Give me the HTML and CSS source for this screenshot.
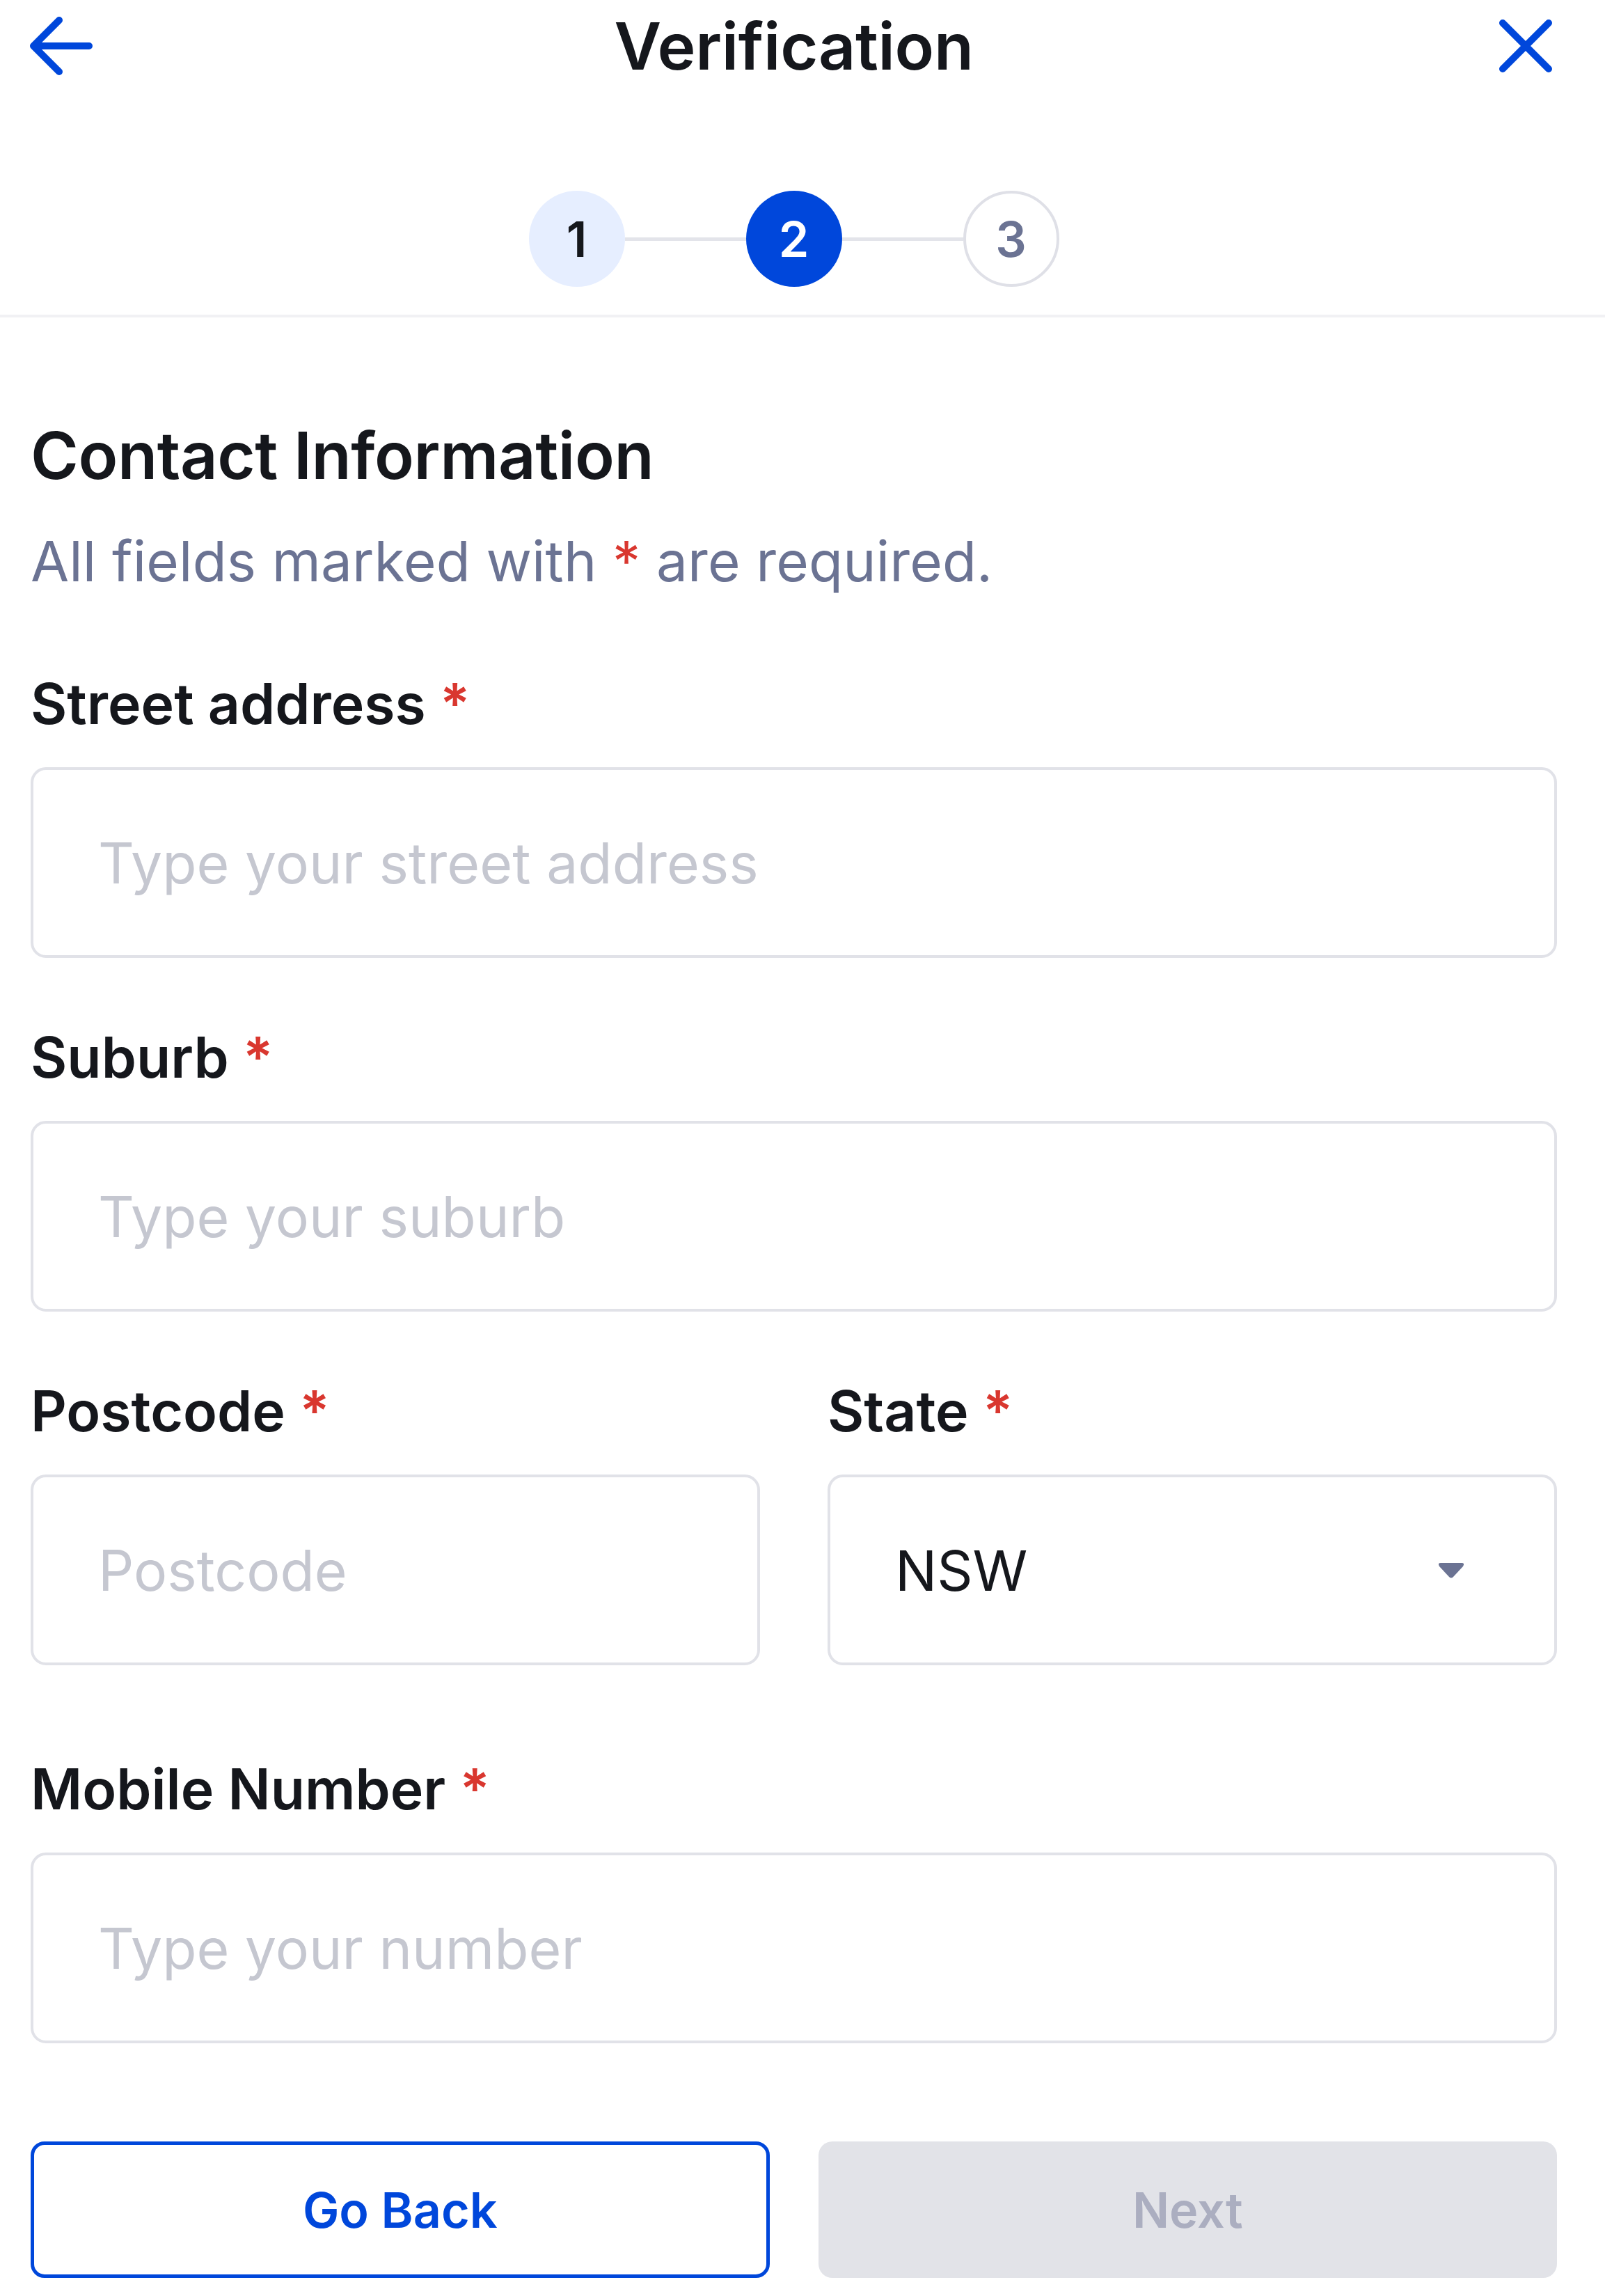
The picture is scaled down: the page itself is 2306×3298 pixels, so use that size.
FILE: index.html
```html
<!DOCTYPE html>
<html lang="en">
<head>
<meta charset="utf-8">
<title>Verification</title>
<link rel="stylesheet" href="styles.css">
</head>
<body>
<header class="top">
  <div class="bar">
    <button class="icon-btn back" aria-label="Back">
      <svg viewBox="0 0 100 100" width="100" height="100"><path d="M47 13 L10 50 L47 87 M10 50 H90" fill="none" stroke="#0047db" stroke-width="10" stroke-linecap="round" stroke-linejoin="round"/></svg>
    </button>
    <h1 class="title">Verification</h1>
    <button class="icon-btn close" aria-label="Close">
      <svg viewBox="0 0 100 100" width="100" height="100"><path d="M17 17 L83 83 M83 17 L17 83" fill="none" stroke="#0047db" stroke-width="10" stroke-linecap="round"/></svg>
    </button>
  </div>
  <ol class="stepper">
    <li class="step done">1</li>
    <li class="connector"></li>
    <li class="step current">2</li>
    <li class="connector"></li>
    <li class="step todo">3</li>
  </ol>
</header>
<main class="form">
  <h2 class="heading">Contact Information</h2>
  <p class="sub">All fields marked with <span class="req">*</span> are required.</p>
  <div class="fields">
    <div class="field">
      <label class="label">Street address <span class="req">*</span></label>
      <input class="input" type="text" placeholder="Type your street address">
    </div>
    <div class="field">
      <label class="label">Suburb <span class="req">*</span></label>
      <input class="input" type="text" placeholder="Type your suburb">
    </div>
    <div class="row">
      <div class="field">
        <label class="label">Postcode <span class="req">*</span></label>
        <input class="input" type="text" placeholder="Postcode">
      </div>
      <div class="field">
        <label class="label">State <span class="req">*</span></label>
        <div class="select">
          <select class="input select-input"><option>NSW</option></select>
          <svg class="caret" viewBox="0 0 42 28" width="42" height="28"><path d="M6 4 H36 Q41 4 38 9 L24 24 Q21 27 18 24 L4 9 Q1 4 6 4 Z" fill="#6b7393"/></svg>
        </div>
      </div>
    </div>
    <div class="field mobile">
      <label class="label">Mobile Number <span class="req">*</span></label>
      <input class="input" type="tel" placeholder="Type your number">
    </div>
  </div>
  <div class="actions">
    <button class="btn btn-outline">Go Back</button>
    <button class="btn btn-disabled" disabled>Next</button>
  </div>
</main>
</body>
</html>
```

FILE: styles.css
```css
* { box-sizing: border-box; }

html, body {
  margin: 0;
  padding: 0;
  background: #ffffff;
}

body {
  font-family: Inter, "Noto Sans", sans-serif;
  color: #15171c;
}

.top {
  padding: 0 69px 40px 44px;
  border-bottom: 4px solid #f1f1f4;
}

.bar {
  display: grid;
  grid-template-columns: 1fr auto 1fr;
  align-items: center;
  height: 132px;
}

.icon-btn {
  background: none;
  border: 0;
  padding: 0;
  width: 100px;
  height: 100px;
  display: block;
}

.icon-btn svg { display: block; }

.back { margin-left: -6px; justify-self: start; }
.close { margin-right: -5px; justify-self: end; }

.title {
  margin: 0;
  font-size: 93px;
  font-weight: 600;
  line-height: 132px;
  letter-spacing: -0.3px;
  color: #15171c;
}

.stepper {
  list-style: none;
  margin: 142px 0 0;
  padding: 0;
  display: flex;
  justify-content: center;
  align-items: center;
}

.step {
  width: 138px;
  height: 138px;
  border-radius: 50%;
  display: flex;
  align-items: center;
  justify-content: center;
  font-size: 70px;
  font-weight: 600;
}

.step.done { background: #e6eeff; color: #15171c; }
.step.current { background: #0047db; color: #ffffff; }
.step.todo { background: #ffffff; border: 4px solid #dfe0e7; color: #6b7393; }

.connector {
  width: 174px;
  height: 5px;
  background: #e3e4ea;
}

.form {
  padding: 140px 69px 26px 44px;
}

.heading {
  margin: 0;
  font-size: 93.5px;
  font-weight: 600;
  line-height: 116px;
  letter-spacing: -0.4px;
}

.sub {
  margin: 44px 0 0;
  font-size: 80px;
  line-height: 100px;
  letter-spacing: 0.15px;
  color: #6b7393;
}

.req { color: #d9372f; }

.fields {
  margin-top: 105px;
  display: flex;
  flex-direction: column;
  gap: 93px;
}

.field {
  display: flex;
  flex-direction: column;
  gap: 41px;
}

.field.mobile { margin-top: 35px; }

.label {
  font-size: 80.5px;
  font-weight: 600;
  line-height: 100px;
}

.input {
  width: 100%;
  height: 274px;
  border: 4px solid #e1e2e8;
  border-radius: 22px;
  padding: 0 40px 0 93px;
  font-family: Inter, "Noto Sans", sans-serif;
  font-size: 80.5px;
  color: #15171c;
  background: #ffffff;
  outline: none;
}

.input::placeholder { color: #c5c7d0; }

.row {
  display: grid;
  grid-template-columns: 1fr 1fr;
  gap: 97px;
}

.select { position: relative; }

.select-input {
  appearance: none;
  -webkit-appearance: none;
  font-size: 80px;
}

.caret {
  position: absolute;
  right: 131px;
  top: 50%;
  transform: translateY(-50%);
}

.actions {
  margin-top: 141px;
  display: grid;
  grid-template-columns: 1fr 1fr;
  gap: 70px;
}

.btn {
  height: 196px;
  border-radius: 20px;
  font-family: Inter, "Noto Sans", sans-serif;
  font-size: 70px;
  font-weight: 600;
}

.btn-outline {
  background: #ffffff;
  border: 5px solid #0047db;
  color: #0047db;
}

.btn-disabled {
  background: #e2e3e8;
  border: 0;
  color: #abaec0;
}
```
